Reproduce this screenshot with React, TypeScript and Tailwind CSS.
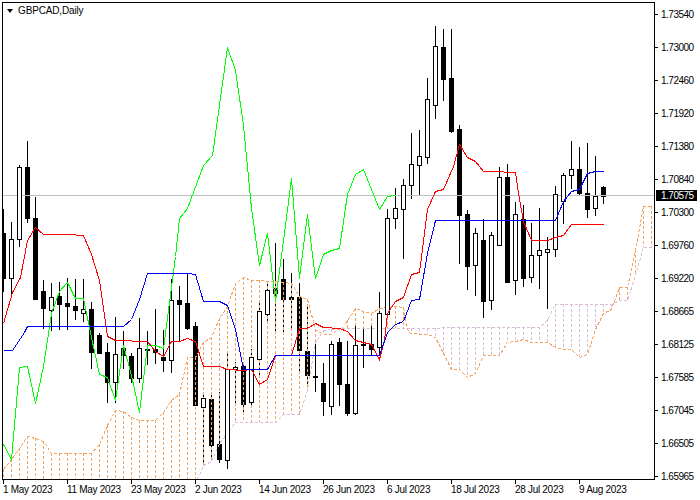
const FONT = "[font-family:'Liberation_Sans',Arial,sans-serif]";

// hi, bodyTop, bodyBottom, lo, white? (pixel rows, one candle every 8px from x=3)
const candles: [number, number, number, number, number][] = [
  [209, 233, 278, 291, 0], [222, 239, 278, 294, 1], [165, 167, 239, 246, 1], [141, 167, 218, 222, 0],
  [197, 218, 299, 299, 0], [280, 291, 308, 328, 0], [283, 297, 310, 330, 1], [282, 296, 304, 329, 0],
  [278, 303, 306, 329, 0], [279, 306, 310, 319, 0], [279, 309, 313, 321, 1], [302, 309, 352, 368, 0],
  [333, 335, 353, 353, 0], [343, 352, 382, 402, 0], [317, 354, 382, 402, 1], [331, 348, 355, 368, 0],
  [353, 356, 378, 382, 0], [318, 348, 378, 382, 1], [331, 349, 350, 364, 0], [309, 349, 352, 363, 0],
  [330, 357, 360, 371, 0], [279, 300, 360, 372, 1], [286, 300, 304, 340, 0], [273, 303, 328, 329, 0],
  [322, 326, 405, 405, 0], [395, 398, 407, 464, 1], [392, 399, 445, 460, 0], [392, 444, 459, 462, 0],
  [354, 369, 460, 468, 1], [362, 367, 369, 405, 1], [362, 366, 404, 412, 0], [349, 357, 402, 404, 1],
  [301, 311, 359, 375, 1], [281, 290, 314, 323, 1], [243, 288, 293, 332, 0], [259, 279, 299, 332, 0],
  [273, 297, 299, 329, 0], [283, 297, 350, 370, 0], [306, 351, 375, 387, 0], [340, 376, 377, 391, 0],
  [363, 383, 401, 415, 0], [341, 344, 406, 414, 1], [338, 342, 384, 405, 0], [341, 384, 413, 415, 0],
  [324, 345, 413, 414, 1], [326, 344, 345, 367, 0], [325, 344, 349, 354, 0], [292, 313, 347, 355, 1],
  [209, 218, 314, 319, 1], [188, 208, 218, 228, 1], [179, 185, 209, 258, 1], [133, 164, 185, 198, 1],
  [130, 156, 165, 194, 1], [78, 99, 157, 163, 1], [26, 46, 105, 118, 1], [29, 47, 79, 100, 0],
  [29, 78, 131, 132, 0], [125, 129, 215, 263, 0], [210, 214, 266, 289, 0], [228, 233, 265, 295, 1],
  [219, 240, 301, 317, 0], [232, 235, 300, 309, 1], [167, 177, 245, 245, 1], [164, 177, 282, 282, 0],
  [202, 214, 280, 294, 1], [205, 219, 278, 286, 0], [223, 255, 277, 282, 1], [208, 250, 255, 288, 1],
  [237, 249, 252, 308, 1], [186, 194, 249, 256, 1], [173, 175, 201, 223, 1], [141, 169, 175, 188, 1],
  [147, 169, 193, 195, 0], [143, 193, 209, 217, 0], [156, 196, 208, 215, 1], [186, 187, 196, 203, 0],
];

type Pt = [number, number];

const red: Pt[] = [
  [3, 323], [12, 292], [20, 277], [27, 240], [35, 227], [43, 234], [67, 234], [83, 235], [91, 254], [99, 280],
  [107, 336], [115, 340], [147, 341], [155, 351], [163, 356], [171, 341], [179, 341], [187, 338], [195, 341],
  [203, 366], [219, 366], [227, 369], [243, 370], [251, 369], [259, 384], [267, 379], [275, 355], [291, 355],
  [299, 328], [307, 328], [315, 323], [323, 327], [339, 328], [347, 331], [355, 340], [371, 344], [379, 359],
  [384, 340], [387, 313], [395, 301], [403, 297], [411, 274], [419, 272], [427, 209], [435, 191], [443, 189],
  [453, 166], [459, 144], [467, 157], [475, 161], [483, 171], [499, 171], [507, 172], [515, 172], [518, 193],
  [523, 221], [531, 240], [547, 240], [555, 237], [563, 235], [571, 224], [603, 224],
];

const blue: Pt[] = [
  [3, 350], [12, 350], [24, 332], [27, 326], [123, 326], [131, 319], [139, 299], [147, 273], [187, 273],
  [195, 274], [203, 301], [219, 301], [227, 305], [235, 329], [243, 369], [267, 369], [275, 355], [379, 355],
  [387, 332], [395, 324], [403, 321], [411, 300], [419, 299], [427, 253], [435, 220], [555, 220], [563, 201],
  [571, 191], [579, 189], [587, 173], [595, 171], [603, 171],
];

const green: Pt[] = [
  [3, 444], [11, 459], [19, 367], [27, 366], [35, 403], [43, 366], [51, 313], [59, 291], [67, 282], [75, 298],
  [83, 298], [91, 337], [99, 374], [107, 377], [115, 400], [123, 345], [131, 375], [139, 412], [147, 345],
  [155, 345], [163, 348], [175, 256], [179, 218], [187, 208], [203, 165], [212, 155], [227, 47], [235, 70],
  [243, 125], [251, 208], [259, 265], [267, 233], [275, 301], [283, 240], [291, 178], [299, 278], [307, 214],
  [315, 278], [323, 254], [331, 250], [339, 248], [347, 194], [355, 174], [363, 169], [379, 209], [387, 196],
  [395, 195],
];

const spanA: Pt[] = [
  [3, 469], [11, 459], [19, 448], [27, 436], [35, 438], [43, 441], [51, 453], [91, 453], [99, 444], [107, 425],
  [115, 410], [123, 411], [131, 417], [139, 420], [155, 420], [163, 412], [171, 400], [179, 394], [187, 357],
  [195, 357], [203, 342], [211, 337], [219, 318], [227, 306], [235, 283], [243, 277], [251, 280], [275, 281],
  [291, 283], [299, 296], [307, 299], [315, 329], [323, 334], [331, 334], [343, 326], [355, 308], [363, 311],
  [371, 313], [379, 308], [395, 306], [403, 307], [407, 329], [410, 333], [427, 334], [435, 337], [443, 353],
  [451, 369], [459, 369], [467, 377], [475, 373], [483, 355], [499, 355], [507, 342], [515, 341], [523, 339],
  [531, 342], [547, 342], [555, 347], [563, 349], [571, 349], [579, 357], [587, 354], [595, 329], [603, 313],
  [611, 309], [619, 287], [627, 287], [635, 250], [643, 206], [651, 206],
];

const spanB: Pt[] = [
  [197, 479], [203, 465], [211, 461], [219, 443], [227, 433], [235, 422], [275, 422], [283, 414], [299, 414],
  [307, 390], [315, 342], [323, 330], [340, 328], [540, 327], [547, 319], [555, 304], [611, 304], [619, 300],
  [627, 300], [635, 275], [643, 247], [651, 247],
];

const yAt = (pts: Pt[], x: number) => {
  if (x <= pts[0][0]) return pts[0][1];
  for (let i = 1; i < pts.length; i++) {
    if (x <= pts[i][0]) {
      const [x0, y0] = pts[i - 1];
      const [x1, y1] = pts[i];
      return y0 + ((y1 - y0) * (x - x0)) / (x1 - x0);
    }
  }
  return pts[pts.length - 1][1];
};

const toPoints = (pts: Pt[]) => pts.map(([x, y]) => `${x + 0.5},${y + 0.5}`).join(" ");

// dashed strokes on verticals come out grey, so each dash is its own rect
const dashRows = (from: number, to: number) => {
  const rows: number[] = [];
  for (let y = Math.round(from); y < Math.round(to); y += 5) rows.push(y);
  return rows;
};

const prices = [
  "1.73540", "1.73000", "1.72460", "1.71920", "1.71380", "1.70840", "1.70300", "1.69760",
  "1.69220", "1.68665", "1.68125", "1.67585", "1.67045", "1.66505", "1.65965",
];

const dates = [
  "1 May 2023", "11 May 2023", "23 May 2023", "2 Jun 2023", "14 Jun 2023",
  "26 Jun 2023", "6 Jul 2023", "18 Jul 2023", "28 Jul 2023", "9 Aug 2023",
];

function Chart() {
  const cloudXs = Array.from({ length: 82 }, (_, i) => 3 + 8 * i);
  return (
    <svg width={651} height={476} viewBox="3 3 651 476" shapeRendering="crispEdges" className="block">
      {candles.map(([hi, , , lo], i) => (
        <line key={i} x1={3 + 8 * i + 0.5} x2={3 + 8 * i + 0.5} y1={hi} y2={lo + 1} stroke="#000" />
      ))}
      {candles.map(([, top, bottom, , white], i) =>
        white ? null : <rect key={i} x={1 + 8 * i} y={top} width={5} height={bottom - top + 1} fill="#000" />
      )}

      <line x1={3} x2={654} y1={195.5} y2={195.5} stroke="#c0c0c0" />

      {cloudXs.map((x) => {
        const a = yAt(spanA, x);
        const b = yAt(spanB, x);
        const color = a < b ? "#f4a460" : "#d8bfd8";
        const end = Math.round(Math.max(a, b));
        return dashRows(Math.min(a, b), end).map((y) => (
          <rect key={`${x}-${y}`} x={x} y={y} width={1} height={Math.min(3, end - y)} fill={color} />
        ));
      })}
      <polyline points={toPoints(spanB)} fill="none" stroke="#d8bfd8" strokeDasharray="3 2" />
      <polyline points={toPoints(spanA)} fill="none" stroke="#f4a460" strokeDasharray="3 2" />

      {candles.map(([, top, bottom, , white], i) =>
        white ? (
          <rect key={i} x={1.5 + 8 * i} y={top + 0.5} width={4} height={bottom - top} fill="#fff" stroke="#000" />
        ) : null
      )}

      <polyline points={toPoints(green)} fill="none" stroke="#00ff00" />
      <polyline points={toPoints(red)} fill="none" stroke="#ff0000" />
      <polyline points={toPoints(blue)} fill="none" stroke="#0000ff" />
    </svg>
  );
}

export default function App() {
  return (
    <div className={`relative w-[700px] h-[500px] overflow-hidden bg-white text-black text-[10px] leading-none ${FONT}`}>
      <div className="flex h-[480px]">
        <div className="relative ml-[2px] mt-[2px] w-[653px] h-[478px] border border-black">
          <Chart />
          <div className="absolute left-[4px] top-[3px] flex items-center gap-[5px]">
            <svg width="6" height="4" viewBox="0 0 6 4">
              <polygon points="0,0 6,0 3,4" fill="#000" />
            </svg>
            <span className="text-[10px] tracking-[-0.15px]">GBPCAD,Daily</span>
          </div>
        </div>
        <div className="relative flex flex-col gap-[24px] pt-[10px] w-[45px]">
          {prices.map((p) => (
            <div key={p} className="flex items-center h-[9px]">
              <span className="w-[3px] h-px bg-black" />
              <span className="ml-[3px] tracking-[-0.5px]">{p}</span>
            </div>
          ))}
          <div className="absolute left-[1px] top-[190px] w-[41px] h-[11px] flex items-center pl-[5px] bg-black text-white tracking-[-0.5px]">
            1.70575
          </div>
        </div>
      </div>
      <div className="flex pl-[3px]">
        {dates.map((d) => (
          <div key={d} className="w-[64px]">
            <div className="w-px h-[4px] bg-black" />
            <div className="mt-[1px] tracking-[-0.3px] whitespace-nowrap">{d}</div>
          </div>
        ))}
      </div>
    </div>
  );
}
